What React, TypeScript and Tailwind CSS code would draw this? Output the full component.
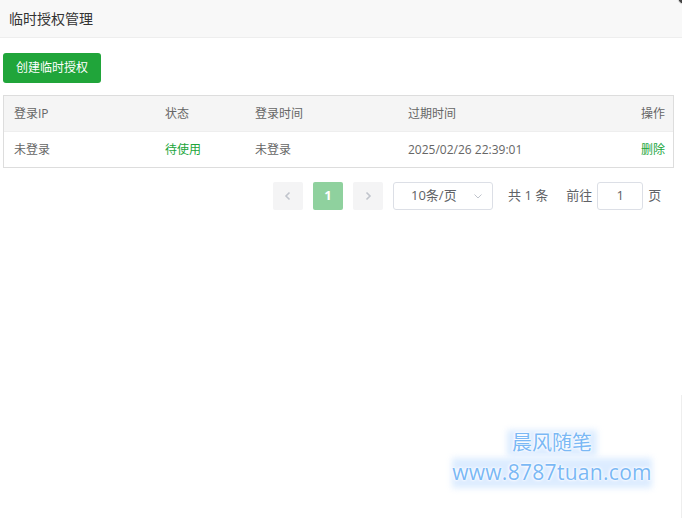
import React from "react";

const font = { fontFamily: '"Open Sans", "Noto Sans CJK SC", sans-serif' };
const glow = { textShadow: "0 0 1px #fff, 0 0 2px #fff, 0 0 3px #fff, 0 0 4px #fff" };

export default function App() {
  return (
    <div className="relative w-[682px] h-[518px] bg-white overflow-hidden text-[#666]" style={font}>
      <div className="h-[38px] bg-[#f8f8f8] border-b border-[#eee] flex items-center pl-[9px] text-[14px] text-[#333]">
        临时授权管理
      </div>
      <div className="absolute right-[-16px] top-[-16px] w-[22px] h-[22px] rounded-full bg-[#444] border border-white" />
      <div className="px-[3px] pt-[15px]">
        <button className="h-[30px] w-[98px] rounded-[3px] bg-[#20a53a] text-white text-[12px] flex items-center justify-center">
          创建临时授权
        </button>
        <div className="mt-[12px] w-[671px] border border-[#ddd] text-[12px]">
          <div className="h-[36px] bg-[#f5f5f5] border-b border-[#eee] flex items-center">
            <div className="w-[161px] pl-[10px]">登录IP</div>
            <div className="w-[90px]">状态</div>
            <div className="w-[153px]">登录时间</div>
            <div className="flex-1">过期时间</div>
            <div className="pr-[8px]">操作</div>
          </div>
          <div className="h-[35px] flex items-center">
            <div className="w-[161px] pl-[10px]">未登录</div>
            <div className="w-[90px] text-[#20a53a]">待使用</div>
            <div className="w-[153px]">未登录</div>
            <div className="flex-1">2025/02/26 22:39:01</div>
            <div className="pr-[8px] text-[#20a53a]">删除</div>
          </div>
        </div>
      </div>
      <div className="mt-[14px] ml-[273px] flex items-center text-[13px] text-[#606266]">
        <div className="w-[30px] h-[28px] bg-[#f4f4f5] rounded-[2px] flex items-center justify-center text-[#c0c4cc]">
          <svg width="10" height="10" viewBox="0 0 10 10" fill="none" stroke="currentColor" strokeWidth="1.6"><path d="M6.5 1.5 3 5l3.5 3.5" /></svg>
        </div>
        <div className="ml-[10px] w-[30px] h-[28px] bg-[#8fd19e] rounded-[2px] flex items-center justify-center text-white font-bold text-[13px]">1</div>
        <div className="ml-[10px] w-[30px] h-[28px] bg-[#f4f4f5] rounded-[2px] flex items-center justify-center text-[#c0c4cc]">
          <svg width="10" height="10" viewBox="0 0 10 10" fill="none" stroke="currentColor" strokeWidth="1.6"><path d="M3.5 1.5 7 5 3.5 8.5" /></svg>
        </div>
        <div className="ml-[10px] w-[100px] h-[28px] border border-[#dcdfe6] rounded-[3px] flex items-center pl-[17px] pr-[8px] justify-between">
          <span>10条/页</span>
          <svg width="12" height="12" viewBox="0 0 12 12" fill="none" stroke="#c0c4cc" strokeWidth="1"><path d="M2.5 4.5 6 8l3.5-3.5" /></svg>
        </div>
        <div className="ml-[15px]">共 1 条</div>
        <div className="ml-[18px]">前往</div>
        <div className="ml-[5px] w-[46px] h-[28px] border border-[#dcdfe6] rounded-[3px] flex items-center justify-center">1</div>
        <div className="ml-[5px]">页</div>
      </div>
      <div className="absolute right-0 top-[395px] w-px h-[123px] bg-[#eee]" />
      <div className="absolute left-[452px] top-[428px] w-[200px] h-[62px]">
        <div className="absolute left-[55px] top-[2px] w-[90px] h-[26px] bg-[#dcecff] blur-[3px]" />
        <div className="absolute left-0 top-[30px] w-[200px] h-[30px] bg-[#dcecff] blur-[3px]" />
        <div className="relative flex flex-col items-center">
          <div className="text-[20px] leading-[30px] text-[#7ab8f5]" style={glow}>晨风随笔</div>
          <div className="mt-[-1px] text-[21px] leading-[30px] tracking-[0.3px] text-[#7ab8f5]" style={glow}>www.8787tuan.com</div>
        </div>
      </div>
    </div>
  );
}
